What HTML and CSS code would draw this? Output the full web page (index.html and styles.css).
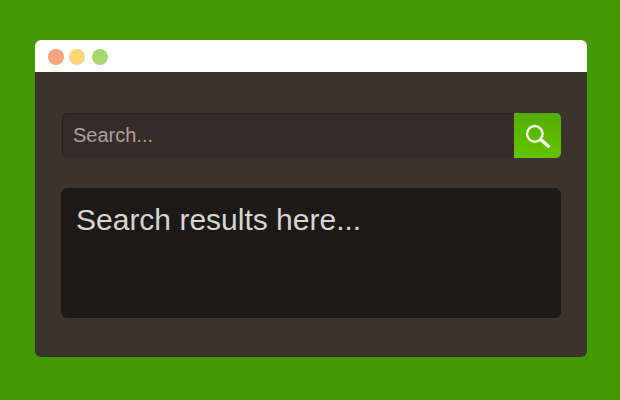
FILE: index.html
```html
<!DOCTYPE html>
<html lang="en">

<head>
  <meta charset="UTF-8">
  <meta name="viewport" content="width=device-width, initial-scale=1.0">
  <title>Search</title>
  <link rel="stylesheet" href="styles.css">
</head>

<body>
  <div class="window">
    <div class="title-bar">
      <span class="dot dot-red"></span>
      <span class="dot dot-yellow"></span>
      <span class="dot dot-green"></span>
    </div>
    <div class="window-body">
      <form class="search-form">
        <input type="text" class="search-input" placeholder="Search...">
        <button class="search-btn" type="button" aria-label="Search">
          <svg width="28" height="28" viewBox="0 0 28 28" fill="none" stroke="#f4f8ec">
            <circle cx="10.8" cy="11.8" r="7.8" stroke-width="2.4" />
            <path d="M16.8 17.6L24.4 24.2" stroke-width="3.4" stroke-linecap="round" />
          </svg>
        </button>
      </form>
      <div class="results">Search results here...</div>
    </div>
  </div>
</body>

</html>
```

FILE: styles.css
```css
body {
  font-family: "Liberation Sans", Arial, sans-serif;
  background-color: #429900;
  margin: 0;
  padding: 40px 33px 43px 35px;
}

.window {
  border-radius: 6px;
  overflow: hidden;
  background-color: #3e342e;
}

.title-bar {
  display: flex;
  align-items: center;
  gap: 5px;
  height: 30px;
  padding: 2px 0 0 13px;
  background-color: #fff;
}

.dot {
  width: 16px;
  height: 16px;
  border-radius: 50%;
}

.dot-red {
  background-color: #f6a37f;
}

.dot-yellow {
  background-color: #f8d577;
}

.dot-green {
  margin-left: 2px;
  background-color: #a6d770;
}

.window-body {
  padding: 41px 26px 39px 26px;
}

.search-form {
  display: flex;
  height: 45px;
  margin-bottom: 30px;
  margin-left: 1px;
}

.search-input {
  flex: 1;
  min-width: 0;
  padding: 0 10px;
  border: 1px solid #2a221e;
  border-right: none;
  border-bottom-color: #3a302b;
  border-radius: 5px 0 0 5px;
  background-color: #352c27;
  color: #a9a49f;
  font-family: inherit;
  font-size: 20px;
  box-sizing: border-box;
  outline: none;
}

.search-input::placeholder {
  color: #a9a49f;
  opacity: 1;
}

.search-btn {
  display: flex;
  align-items: center;
  justify-content: center;
  width: 47px;
  padding: 0;
  border: none;
  border-radius: 0 5px 5px 0;
  background-color: #5cba00;
  background-image: linear-gradient(#52ad00, #65c400);
  cursor: pointer;
}

.results {
  height: 130px;
  padding: 15px;
  border-radius: 6px;
  background-color: #1d1916;
  color: #d6d5d3;
  font-size: 30px;
  line-height: 34px;
  box-sizing: border-box;
}
```
